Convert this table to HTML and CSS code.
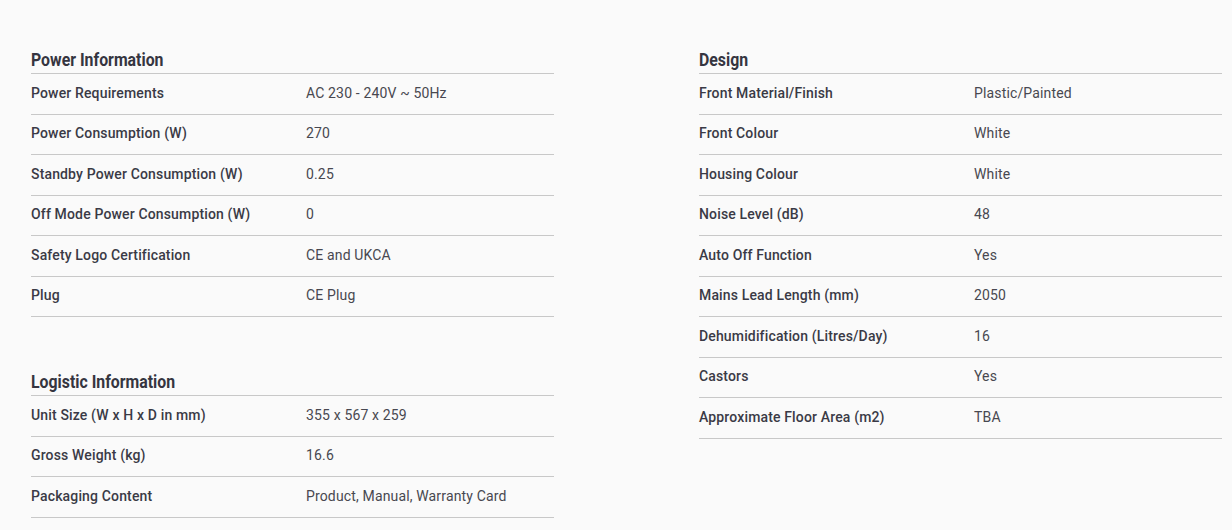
FILE: index.html
```html
<!DOCTYPE html>
<html lang="en">
<head>
<meta charset="utf-8">
<title>Specifications</title>
<link rel="stylesheet" href="styles.css">
</head>
<body>
<div class="specs">
  <div class="col">
    <section class="group">
      <h2 class="group-title"><span>Power Information</span></h2>
      <dl class="rows">
        <div class="row"><dt>Power Requirements</dt><dd>AC 230 - 240V ~ 50Hz</dd></div>
        <div class="row"><dt>Power Consumption (W)</dt><dd>270</dd></div>
        <div class="row"><dt>Standby Power Consumption (W)</dt><dd>0.25</dd></div>
        <div class="row"><dt>Off Mode Power Consumption (W)</dt><dd>0</dd></div>
        <div class="row"><dt>Safety Logo Certification</dt><dd>CE and UKCA</dd></div>
        <div class="row"><dt>Plug</dt><dd>CE Plug</dd></div>
      </dl>
    </section>
    <section class="group">
      <h2 class="group-title"><span>Logistic Information</span></h2>
      <dl class="rows">
        <div class="row"><dt>Unit Size (W x H x D in mm)</dt><dd>355 x 567 x 259</dd></div>
        <div class="row"><dt>Gross Weight (kg)</dt><dd>16.6</dd></div>
        <div class="row"><dt>Packaging Content</dt><dd>Product, Manual, Warranty Card</dd></div>
      </dl>
    </section>
  </div>
  <div class="col">
    <section class="group">
      <h2 class="group-title"><span>Design</span></h2>
      <dl class="rows">
        <div class="row"><dt>Front Material/Finish</dt><dd>Plastic/Painted</dd></div>
        <div class="row"><dt>Front Colour</dt><dd>White</dd></div>
        <div class="row"><dt>Housing Colour</dt><dd>White</dd></div>
        <div class="row"><dt>Noise Level (dB)</dt><dd>48</dd></div>
        <div class="row"><dt>Auto Off Function</dt><dd>Yes</dd></div>
        <div class="row"><dt>Mains Lead Length (mm)</dt><dd>2050</dd></div>
        <div class="row"><dt>Dehumidification (Litres/Day)</dt><dd>16</dd></div>
        <div class="row"><dt>Castors</dt><dd>Yes</dd></div>
        <div class="row"><dt>Approximate Floor Area (m2)</dt><dd>TBA</dd></div>
      </dl>
    </section>
  </div>
</div>
</body>
</html>
```
FILE: styles.css
```css
html, body {
  margin: 0;
  padding: 0;
  background: #fafafa;
}
body {
  font-family: Roboto, "Liberation Sans", Arial, sans-serif;
  color: #333;
}
.specs {
  display: grid;
  grid-template-columns: 523px 523px;
  column-gap: 145px;
  padding: 48px 0 0 31px;
}
.group + .group {
  margin-top: 53px;
}
.group-title {
  margin: 0;
  font-size: 18px;
  font-weight: 700;
  line-height: 24px;
  color: #353540;
  border-bottom: 1px solid #c8c8c8;
  padding-bottom: 1px;
}
.group-title span {
  display: inline-block;
  transform: scaleX(0.88);
  transform-origin: left center;
}
.rows {
  margin: 0;
}
.row {
  display: grid;
  grid-template-columns: 275px 1fr;
  align-items: center;
  height: 37.5px;
  padding-bottom: 2px;
  border-bottom: 1px solid #c8c8c8;
  font-size: 14px;
  letter-spacing: 0.15px;
}
.row dt {
  font-weight: 500;
  color: #3a3a46;
}
.row dd {
  margin: 0;
  color: #484850;
}
```
